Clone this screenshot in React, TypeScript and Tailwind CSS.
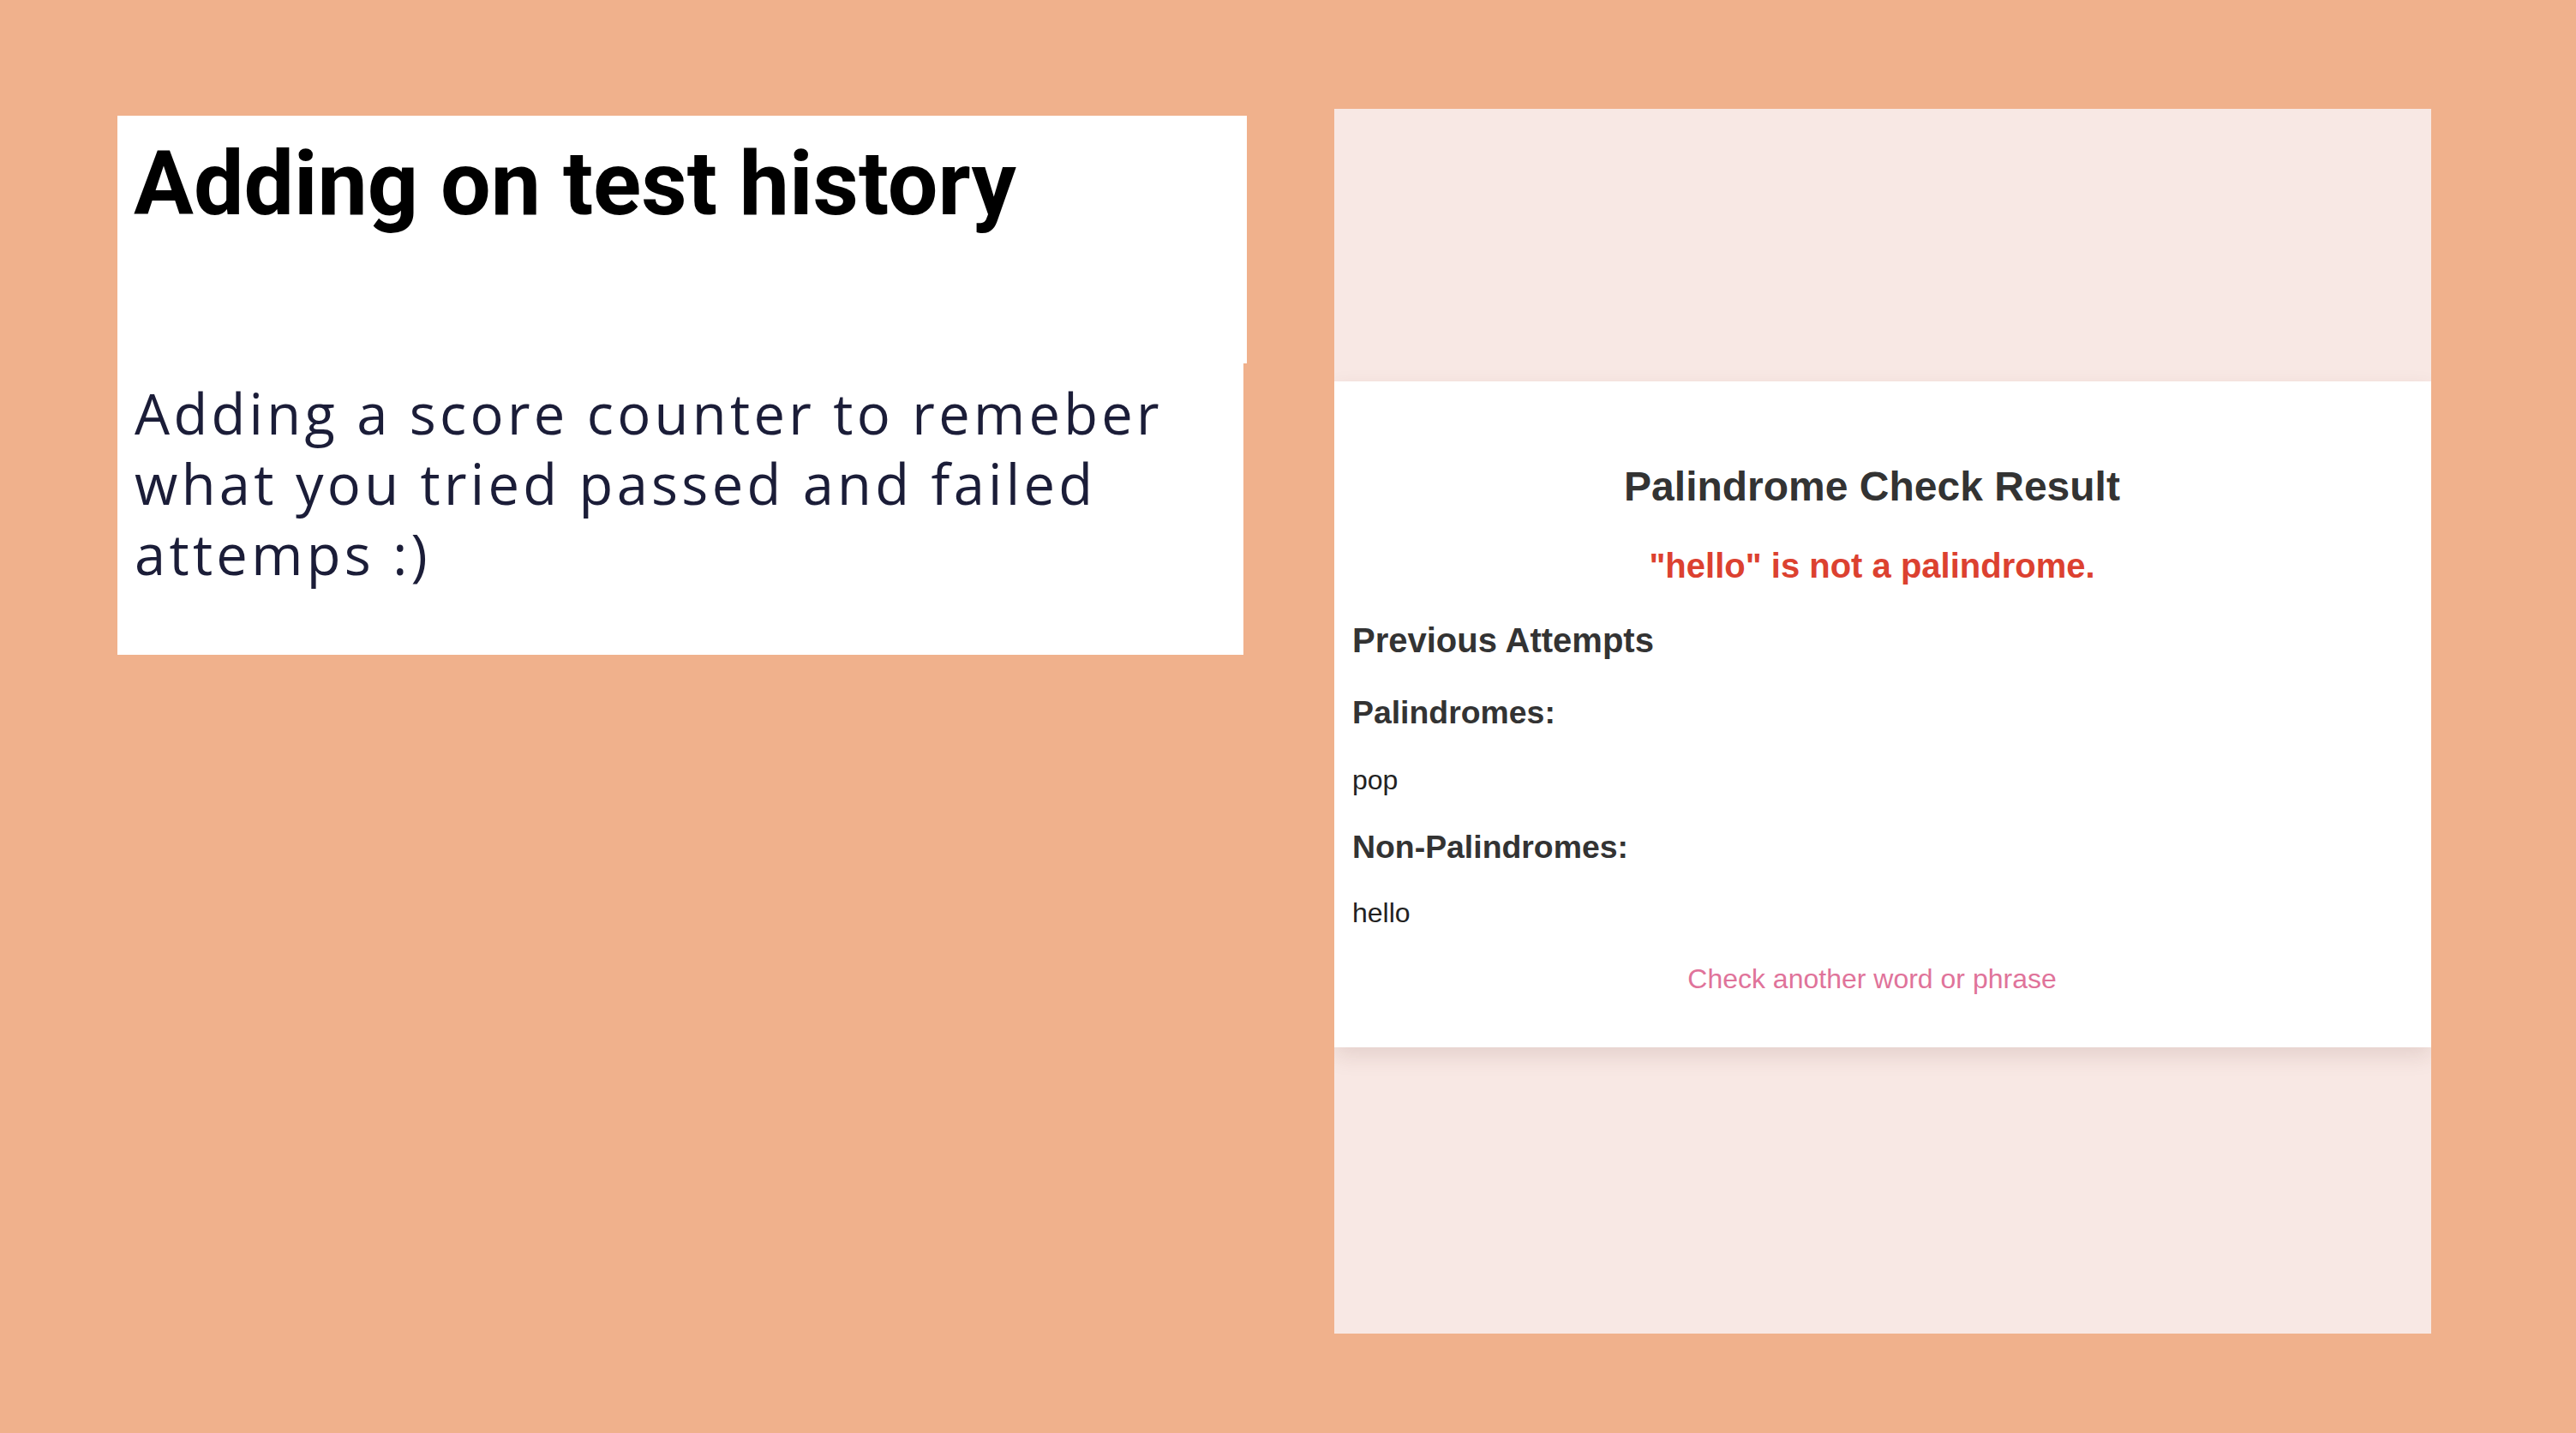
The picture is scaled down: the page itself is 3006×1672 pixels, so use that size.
export default function App() {
  return (
    <div className="w-[3006px] h-[1672px] bg-[#f0b18c] flex items-start pl-[137px] pt-[127px] gap-[102px] overflow-hidden">
      {/* Slide text side */}
      <div className="flex flex-col items-start mt-[8px]">
        <div className="w-[1318px] h-[289px] bg-white pl-[19px] pt-[20px]">
          <h1
            className="text-[104px] leading-[120px] font-bold text-black"
            style={{ fontFamily: 'Roboto, "Liberation Sans", sans-serif' }}
          >
            Adding on test history
          </h1>
        </div>
        <div className="w-[1314px] h-[340px] bg-white pl-[20px] pt-[17px]">
          <p
            className="text-[65px] leading-[82px] text-[#1b1d38] tracking-[4.3px]"
            style={{ fontFamily: '"Open Sans", "Liberation Sans", sans-serif' }}
          >
            Adding a score counter to remeber
            <br />
            what you tried passed and failed
            <br />
            attemps :)
          </p>
        </div>
      </div>

      {/* Screenshot of the result page */}
      <div
        className="w-[1280px] h-[1429px] bg-[#f8e8e4] flex flex-col overflow-hidden"
        style={{ fontFamily: '"Liberation Sans", Arial, sans-serif' }}
      >
        <div className="h-[318px] shrink-0" />
        <div className="h-[777px] shrink-0 bg-white pl-[21px] pr-[46px] pt-[95px] shadow-[0_10px_24px_rgba(90,40,30,0.12)] relative">
          <h2 className="text-[48px] leading-[56px] font-bold text-[#333] text-center">
            Palindrome Check Result
          </h2>
          <p className="mt-[40px] text-[40px] leading-[48px] font-bold text-[#dc4130] text-center">
            "hello" is not a palindrome.
          </p>
          <h3 className="mt-[39px] text-[40px] leading-[48px] font-bold text-[#333]">
            Previous Attempts
          </h3>
          <h4 className="mt-[38px] text-[37.4px] leading-[44px] font-bold text-[#333]">
            Palindromes:
          </h4>
          <ul className="mt-[38px]">
            <li className="text-[32px] leading-[38px] text-[#222]">pop</li>
          </ul>
          <h4 className="mt-[37px] text-[37.4px] leading-[44px] font-bold text-[#333]">
            Non-Palindromes:
          </h4>
          <ul className="mt-[36px]">
            <li className="text-[32px] leading-[38px] text-[#222]">hello</li>
          </ul>
          <div className="mt-[39px] text-center">
            <a className="text-[32px] leading-[38px] text-[#e0739a]">
              Check another word or phrase
            </a>
          </div>
        </div>
        <div className="flex-1" />
      </div>
    </div>
  )
}
